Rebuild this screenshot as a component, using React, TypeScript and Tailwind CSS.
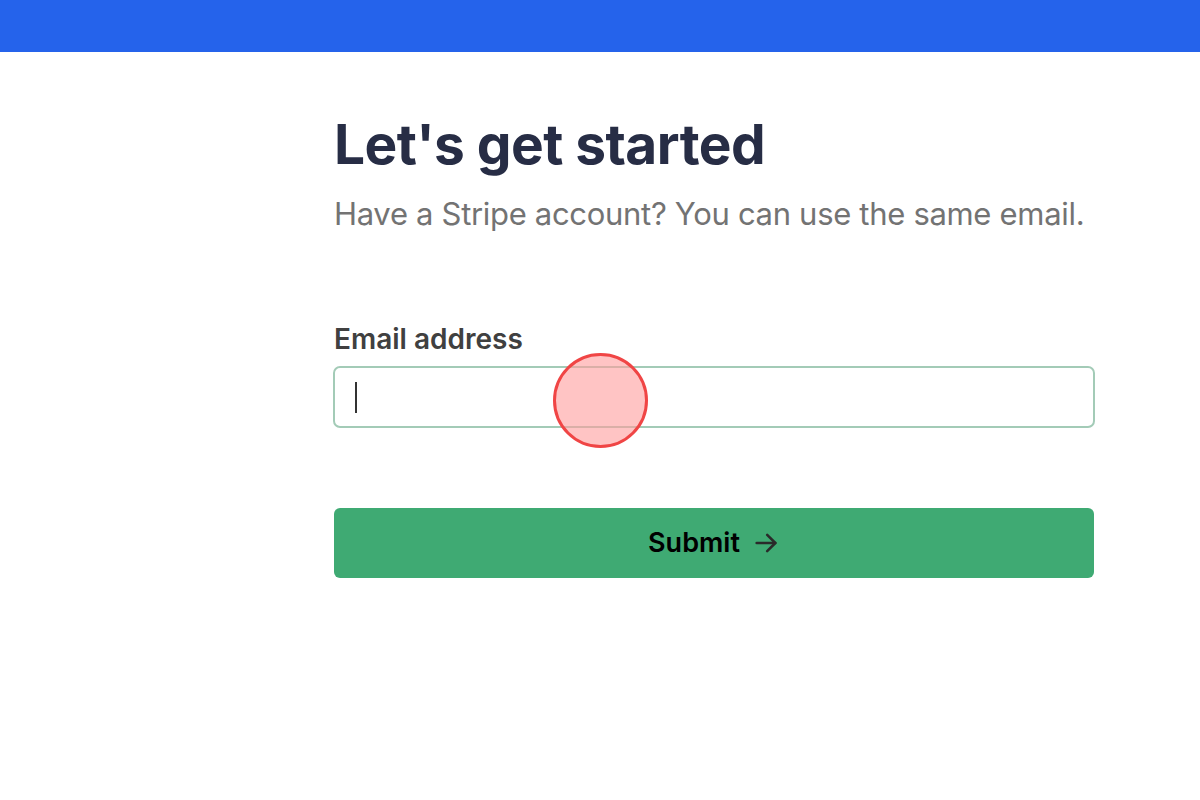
import React from "react";

const App = () => {
  return (
    <div className="relative min-h-[800px] w-full bg-white font-['Inter',sans-serif]">
      {/* Top bar */}
      <div className="h-[52px] w-full bg-[#2563eb]" />

      <div className="ml-[334px] w-[760px] pt-[60px]">
        <h1 className="text-[55px] font-bold leading-[64px] tracking-[-0.01em] text-[#272d45]">
          Let's get started
        </h1>
        <p className="mt-[18px] text-[31px] leading-[40px] tracking-[-0.01em] text-[#737373]">
          Have a Stripe account? You can use the same email.
        </p>

        <label className="mt-[88px] block text-[28px] font-semibold leading-[34px] text-[#404040]">
          Email address
        </label>
        <div className="mt-[10px] -ml-px flex h-[62px] w-[762px] items-center rounded-[7px] border-2 border-[#a3cbb7] px-[20px]">
          <span className="h-[31px] w-[2px] bg-[#333]" />
        </div>

        <button className="mt-[80px] flex h-[70px] w-[760px] items-center justify-center gap-[12px] rounded-[6px] bg-[#3faa73] text-[27px] font-semibold text-black">
          Submit
          <svg width="28" height="28" viewBox="0 0 24 24" fill="none" stroke="#2a2a2a" strokeWidth="2.2" strokeLinecap="round" strokeLinejoin="round">
            <path d="M4 12h16" />
            <path d="M13 5l7 7-7 7" />
          </svg>
        </button>
      </div>

      {/* Touch indicator */}
      <div className="absolute left-[553px] top-[353px] h-[95px] w-[95px] rounded-full border-[3px] border-[#f04545] bg-[#ff9c9c]/60" />
    </div>
  );
};

export default App;
